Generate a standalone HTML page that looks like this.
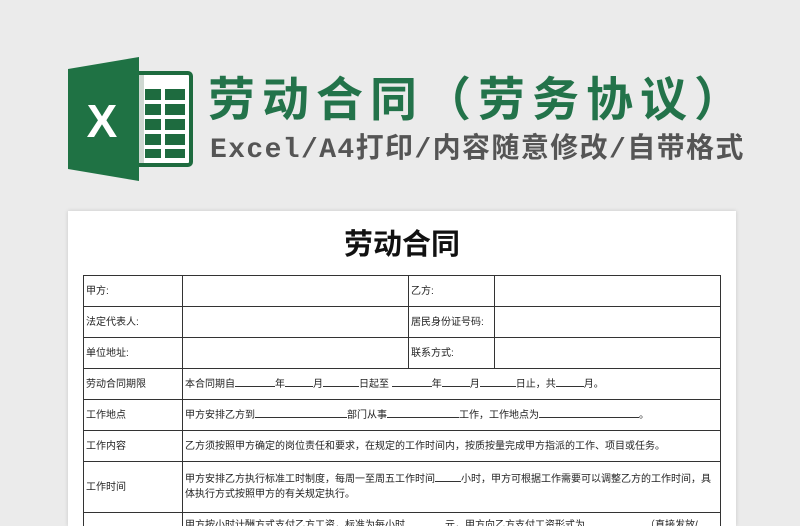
<!DOCTYPE html>
<html><head><meta charset="utf-8"><style>
*{margin:0;padding:0;box-sizing:border-box}
html,body{width:800px;height:526px;overflow:hidden}
body{background:#ebebeb;position:relative;font-family:"Liberation Sans","Noto Sans CJK SC",sans-serif}
.t1{position:absolute;left:208px;top:70px;font-size:47px;font-weight:bold;color:#23734a;letter-spacing:7px;white-space:nowrap;line-height:60px}
.t2{position:absolute;left:210px;top:132px;font-size:28px;font-weight:bold;color:#555;white-space:nowrap;line-height:38px;letter-spacing:1.4px;font-family:"Liberation Mono","Noto Sans CJK SC",monospace}
.paper{position:absolute;left:68px;top:211px;width:668px;height:315px;background:#fff;box-shadow:0 0 4px rgba(0,0,0,.15);overflow:hidden}
.h{position:absolute;left:0;width:668px;top:14px;text-align:center;font-size:29px;font-weight:bold;color:#111;line-height:40px}
table{position:absolute;left:15px;top:64px;border-collapse:collapse;width:638px;font-size:10px;color:#222}
td{border:1.3px solid #333;padding:0 2px;height:31px;vertical-align:middle;line-height:15px}
u{text-decoration:none;border-bottom:1px solid #333;display:inline-block;height:10px;vertical-align:baseline}
</style></head><body>
<svg style="position:absolute;left:66px;top:57px" width="128" height="124" viewBox="0 0 128 124">
<rect x="60" y="16" width="65" height="92" rx="3" fill="#fff" stroke="#1e6b3f" stroke-width="4"/>
<rect x="62" y="18" width="16" height="88" fill="#cfd8d2"/>
<g fill="#1e6b3f">
<rect x="79" y="32" width="16" height="11"/><rect x="99" y="32" width="20" height="11"/>
<rect x="79" y="47" width="16" height="11"/><rect x="99" y="47" width="20" height="11"/>
<rect x="79" y="62" width="16" height="11"/><rect x="99" y="62" width="20" height="11"/>
<rect x="79" y="77" width="16" height="11"/><rect x="99" y="77" width="20" height="11"/>
<rect x="79" y="92" width="16" height="9"/><rect x="99" y="92" width="20" height="9"/>
</g>
<polygon points="2,12 73,0 73,124 2,112" fill="#1f7244"/>
<text x="36" y="80" font-size="46" font-weight="bold" fill="#fff" text-anchor="middle" font-family="Liberation Sans">X</text>
</svg>
<div class="t1">劳动合同（劳务协议）</div>
<div class="t2">Excel/A4打印/内容随意修改/自带格式</div>
<div class="paper">
<div class="h">劳动合同</div>
<table>
<colgroup><col style="width:99px"><col style="width:226px"><col style="width:86px"><col></colgroup>
<tr><td>甲方:</td><td></td><td>乙方:</td><td></td></tr>
<tr><td>法定代表人:</td><td></td><td>居民身份证号码:</td><td></td></tr>
<tr><td>单位地址:</td><td></td><td>联系方式:</td><td></td></tr>
<tr><td>劳动合同期限</td><td colspan="3">本合同期自<u style="width:40px"></u>年<u style="width:28px"></u>月<u style="width:36px"></u>日起至 <u style="width:40px"></u>年<u style="width:28px"></u>月<u style="width:36px"></u>日止，共<u style="width:28px"></u>月。</td></tr>
<tr><td>工作地点</td><td colspan="3">甲方安排乙方到<u style="width:92px"></u>部门从事<u style="width:72px"></u>工作，工作地点为<u style="width:100px"></u>。</td></tr>
<tr><td>工作内容</td><td colspan="3">乙方须按照甲方确定的岗位责任和要求，在规定的工作时间内，按质按量完成甲方指派的工作、项目或任务。</td></tr>
<tr><td style="height:51px">工作时间</td><td colspan="3">甲方安排乙方执行标准工时制度，每周一至周五工作时间<u style="width:26px"></u>小时，甲方可根据工作需要可以调整乙方的工作时间，具体执行方式按照甲方的有关规定执行。</td></tr>
<tr><td style="height:31px"></td><td colspan="3" style="vertical-align:top;padding-top:5px">甲方按小时计酬方式支付乙方工资，标准为每小时<u style="width:40px"></u>元，甲方向乙方支付工资形式为<u style="width:60px"></u>（直接发放/</td></tr>
</table>
</div>
</body></html>
